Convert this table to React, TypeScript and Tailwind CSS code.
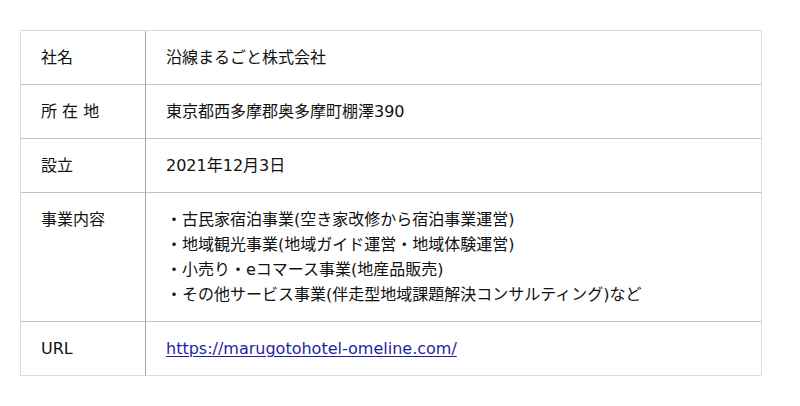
import React from 'react';

const rows: { label: string; value: React.ReactNode }[] = [
  { label: '社名', value: '沿線まるごと株式会社' },
  { label: '所 在 地', value: '東京都西多摩郡奥多摩町棚澤390' },
  { label: '設立', value: '2021年12月3日' },
  {
    label: '事業内容',
    value: (
      <>
        <p>・古民家宿泊事業(空き家改修から宿泊事業運営)</p>
        <p>・地域観光事業(地域ガイド運営・地域体験運営)</p>
        <p>・小売り・eコマース事業(地産品販売)</p>
        <p>・その他サービス事業(伴走型地域課題解決コンサルティング)など</p>
      </>
    ),
  },
  {
    label: 'URL',
    value: (
      <a href="#" className="text-[#1f1fa3] underline underline-offset-2">
        https://marugotohotel-omeline.com/
      </a>
    ),
  },
];

export default function App() {
  return (
    <div
      className="w-[800px] h-[406px] bg-white pt-[30px] px-[20px] text-[16px] leading-[25px] text-[#111]"
      style={{ fontFamily: '"DejaVu Sans", "Noto Sans CJK JP", sans-serif' }}
    >
      <div className="w-[742px] border border-[#dcdcdc]">
        {rows.map((r, i) => (
          <div key={r.label} className={i > 0 ? 'flex border-t border-[#c2c2c2]' : 'flex'}>
            <div className="w-[125px] shrink-0 border-r border-[#a6a6a6] py-[14px] pl-[20px]">{r.label}</div>
            <div className="flex-1 py-[14px] pl-[20px]">{r.value}</div>
          </div>
        ))}
      </div>
    </div>
  );
}
